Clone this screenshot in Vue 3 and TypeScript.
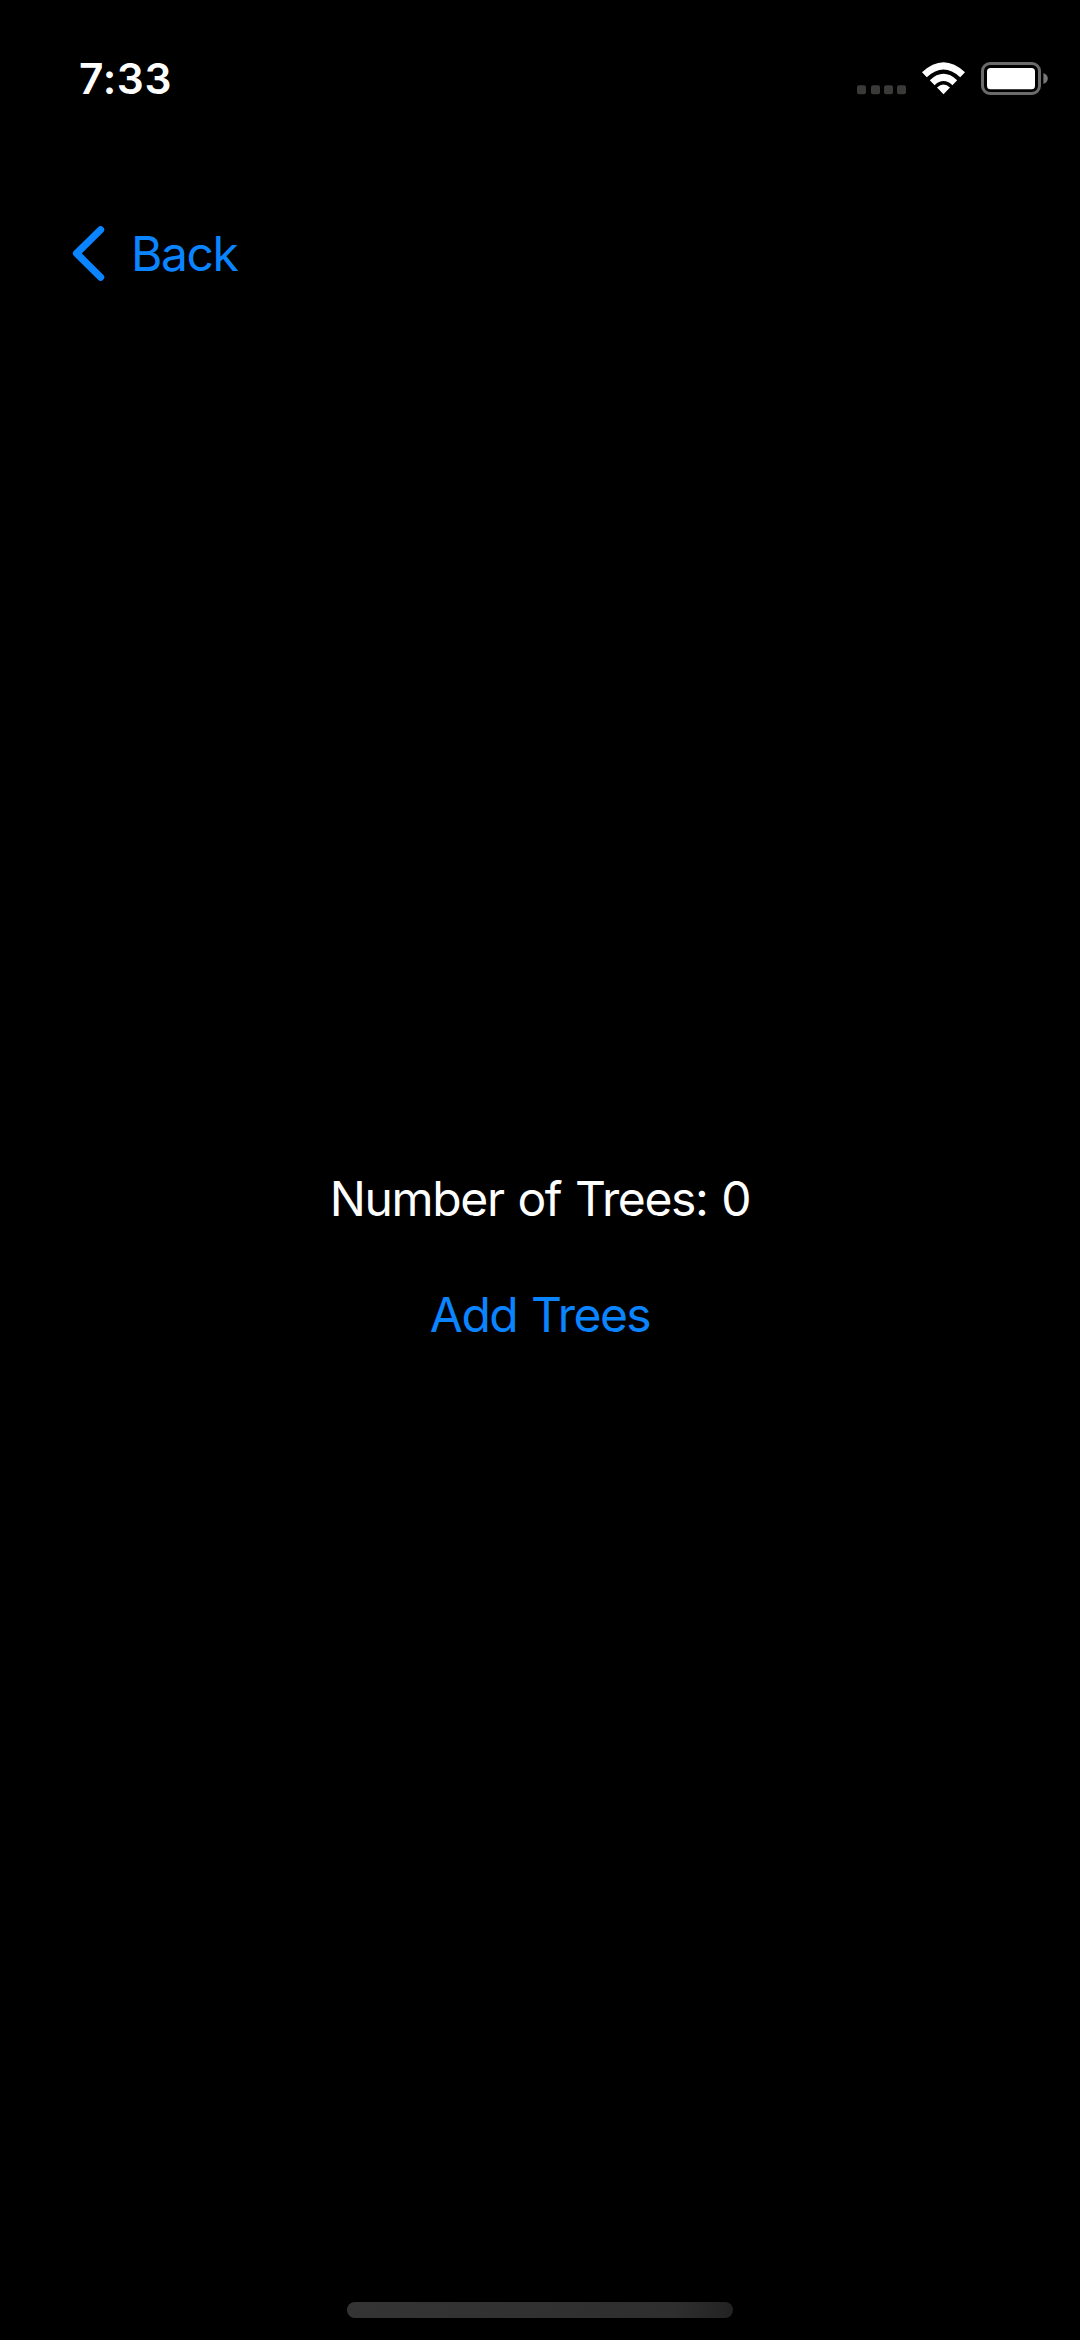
<script setup lang="ts">
import { ref } from 'vue'

const treeCount = ref<number>(0)
const time = '7:33'
const cellularDots: number[] = [17, 31, 44, 57]

function addTree(): void {
  treeCount.value += 1
}
</script>

<template>
  <div class="screen">
    <header class="status-bar">
      <span class="time">{{ time }}</span>
      <svg class="status-icons" width="240" height="60" viewBox="0 0 240 60" aria-hidden="true">
        <rect v-for="x in cellularDots" :key="x" :x="x" y="35.2" width="9" height="9" rx="2" fill="#3a3a38" />
        <g fill="none" stroke="#fff" stroke-width="7">
          <path d="M84.4 24.7 Q103.5 6.9 122.6 24.7" />
          <path d="M92.2 32.7 Q103.5 22.1 114.8 32.7" />
        </g>
        <path d="M97 37.6 Q103.5 31.6 110 37.6 L103.5 44.2 Z" fill="#fff" />
        <rect x="142.5" y="13.5" width="57" height="30" rx="7.5" fill="none" stroke="#6b6b6b" stroke-width="3" />
        <rect x="147" y="18" width="48" height="21.3" rx="3.5" fill="#fff" />
        <path d="M203.4 23 Q207.8 24.8 207.8 28.5 Q207.8 32.2 203.4 34 Z" fill="#777" />
      </svg>
    </header>

    <nav class="nav-bar">
      <button class="link back" type="button">
        <svg class="chevron" width="34" height="58" viewBox="0 0 34 58" aria-hidden="true">
          <path d="M28.6 4.8 L4.6 28.4 L28.6 52.2" fill="none" stroke="#0a84ff" stroke-width="7.2" stroke-linecap="round" stroke-linejoin="round" />
        </svg>
        <span class="back-label">Back</span>
      </button>
    </nav>

    <main class="content">
      <p class="count">Number of Trees: {{ treeCount }}</p>
      <button class="link add" type="button" @click="addTree">Add Trees</button>
    </main>

    <footer class="home-area">
      <div class="home-indicator"></div>
    </footer>
  </div>
</template>

<style>
body {
  margin: 0;
  background: #000;
}
</style>

<style scoped>
.screen {
  display: flex;
  flex-direction: column;
  box-sizing: border-box;
  width: 1080px;
  height: 2340px;
  background: #000;
  color: #fff;
  font-family: Inter, "Liberation Sans", sans-serif;
  font-size: 48px;
  line-height: 58px;
  overflow: hidden;
}

.status-bar {
  display: flex;
  justify-content: space-between;
  height: 174px;
  padding: 50px 0 0 79px;
  box-sizing: border-box;
}

.time {
  padding-top: 3px;
  font-size: 42.5px;
  font-weight: 570;
  letter-spacing: 0.6px;
  line-height: 52px;
}

.status-icons {
  display: block;
}

.nav-bar {
  height: 110px;
  padding: 51px 0 0 72px;
  box-sizing: border-box;
}

.link {
  margin: 0;
  padding: 0;
  border: 0;
  background: none;
  color: #0a84ff;
  font: inherit;
  line-height: 58px;
}

.back {
  display: flex;
  align-items: flex-start;
  gap: 25px;
}

.chevron {
  display: block;
}

.back-label {
  letter-spacing: -1.4px;
}

.content {
  display: flex;
  flex: 1;
  flex-direction: column;
  align-items: center;
  gap: 58px;
  padding-top: 886px;
}

.count {
  margin: 0;
  letter-spacing: -1.35px;
  word-spacing: 1.6px;
  white-space: nowrap;
}

.add {
  letter-spacing: -1.55px;
  word-spacing: 2px;
}

.home-area {
  display: flex;
  justify-content: center;
  height: 38px;
}

.home-indicator {
  width: 386px;
  height: 16px;
  border-radius: 8px;
  background: linear-gradient(90deg, #343434 0%, #2e2e2e 85%, #222 100%);
}
</style>
